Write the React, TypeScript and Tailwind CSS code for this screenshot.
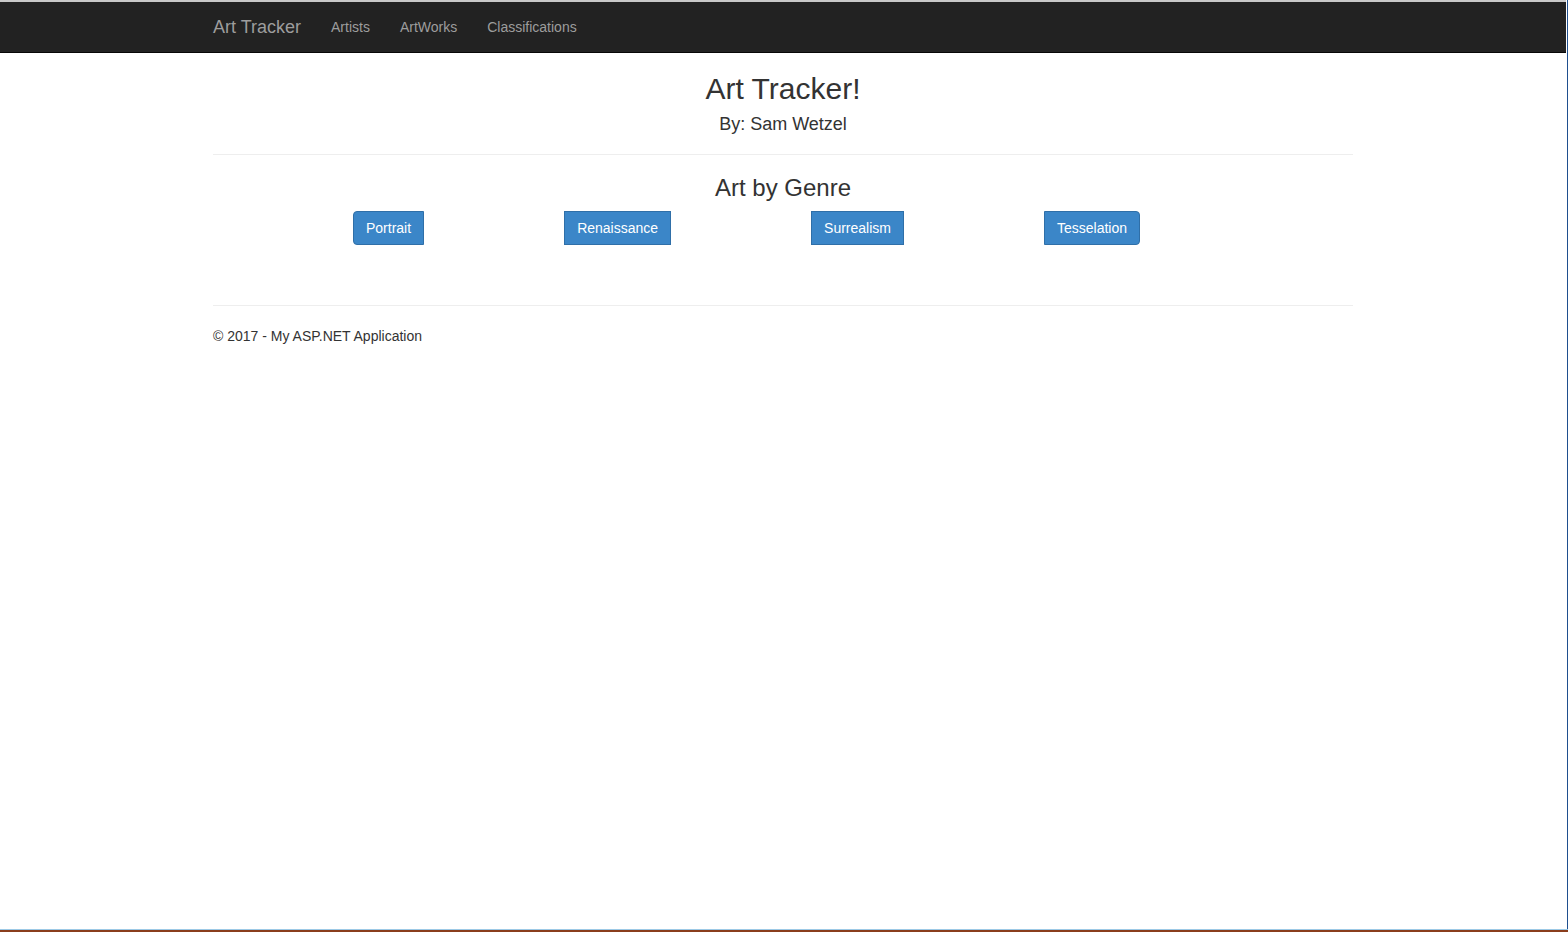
const genres = ["Portrait", "Renaissance", "Surrealism", "Tesselation"];

const navLinks = ["Artists", "ArtWorks", "Classifications"];

export default function App() {
  return (
    <div
      className="flex h-[932px] w-full flex-col overflow-hidden bg-white text-[#333]"
      style={{ fontFamily: '"Liberation Sans", Arial, Helvetica, sans-serif' }}
    >
      <div className="flex min-h-0 flex-1">
        <div className="flex min-w-0 flex-1 flex-col">
          {/* window top edge */}
          <div className="h-[2px] bg-[#c9c9c9]" />

          {/* navbar */}
          <nav className="h-[51px] border-b border-[#080808] bg-[#222]">
            <div className="mx-auto flex h-[50px] w-[1140px] items-center">
              <a className="pr-[15px] text-[18px] leading-5 text-[#9d9d9d]">Art Tracker</a>
              {navLinks.map((l) => (
                <a key={l} className="px-[15px] text-[14px] leading-5 text-[#9d9d9d]">
                  {l}
                </a>
              ))}
            </div>
          </nav>

          <main className="mx-auto w-[1140px]">
            <div className="text-center">
              <h2 className="mt-[19px] text-[30px] leading-[33px]">Art Tracker!</h2>
              <h4 className="mt-[9px] text-[18px] leading-[20px]">By: Sam Wetzel</h4>
            </div>

            <hr className="mt-[20px] border-t border-[#eee]" />

            <h3 className="mt-[20px] text-center text-[24px] leading-[26px]">Art by Genre</h3>

            <div className="mt-[10px] flex gap-[140px] pl-[140px]">
              {genres.map((g, i) => (
                <button
                  key={g}
                  className={
                    "h-[34px] border border-[#2f6fa8] bg-[#3b86c8] px-3 text-[14px] leading-5 text-white " +
                    (i === 0 ? "rounded-l-[4px]" : i === genres.length - 1 ? "rounded-r-[4px]" : "")
                  }
                >
                  {g}
                </button>
              ))}
            </div>

            <hr className="mt-[60px] border-t border-[#eee]" />

            <footer className="pt-[20px]">
              <p className="text-[14px] leading-5">© 2017 - My ASP.NET Application</p>
            </footer>
          </main>
        </div>

        {/* window right edge */}
        <div className="w-[1px] bg-white" />
        <div className="w-[1px] bg-[#1f4f8f]" />
      </div>

      {/* window bottom edge */}
      <div className="h-[1px] bg-[#9cc9e6]" />
      <div className="h-[2px] bg-[#8a3d1c]" />
    </div>
  );
}
